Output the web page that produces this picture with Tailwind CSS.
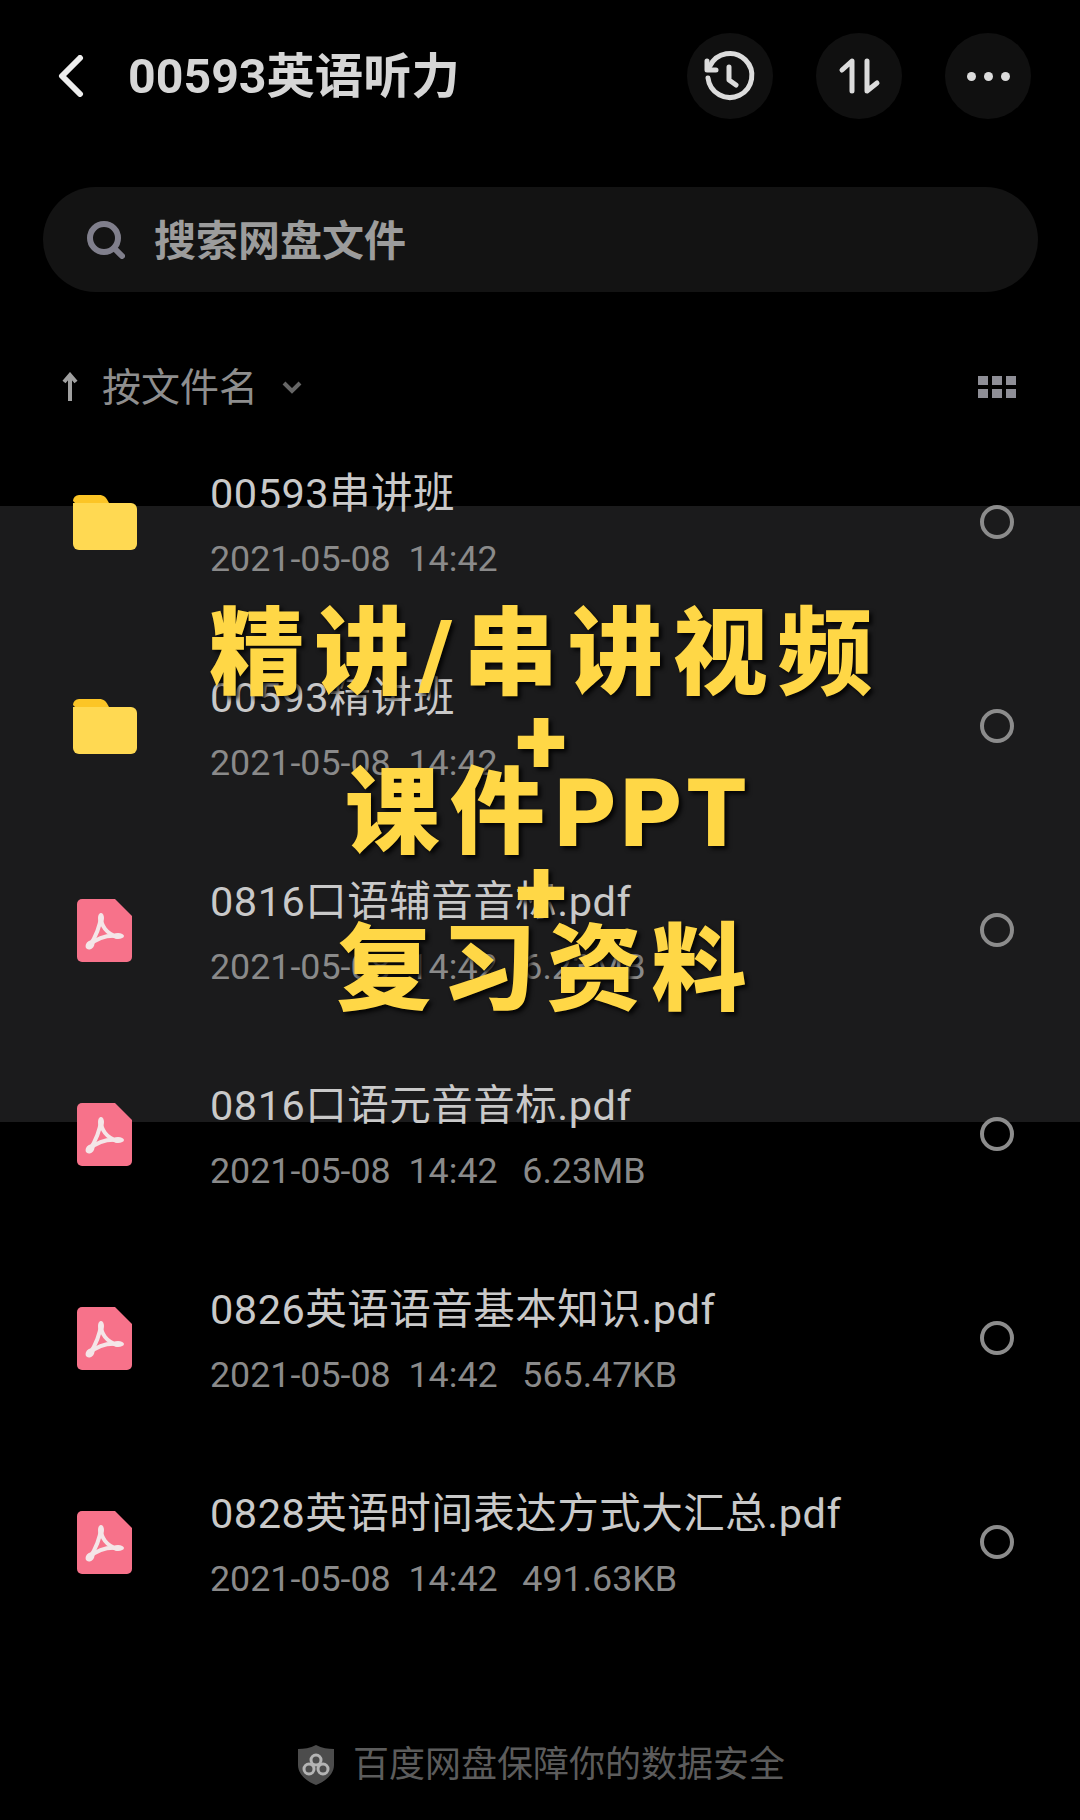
<!DOCTYPE html>
<html lang="zh-CN">
<head>
  <meta charset="UTF-8" />
  <title>00593英语听力</title>
  <script src="https://cdn.jsdelivr.net/npm/@tailwindcss/browser@4"></script>
</head>
<body class="bg-black">
  <div class="relative w-[1080px] h-[1820px] overflow-hidden bg-black font-['Roboto','Noto_Sans_CJK_SC',sans-serif]">

    <!-- Band behind the list -->
    <div class="absolute left-0 top-[506px] w-full h-[616px] bg-[#1b1b1c]"></div>

    <div class="relative">
      <!-- Header -->
      <div class="h-[152px] flex items-center pl-[56px] pr-[49px]">
        <svg width="28" height="42" viewBox="0 0 28 42" fill="none" stroke="#eeeeee" stroke-width="6" stroke-linecap="round" stroke-linejoin="round"><path d="M24 3L6 21L24 39"/></svg>
        <h1 class="ml-[44px] mt-[3px] text-[48.3px] leading-none font-bold text-[#d6d6d6]">00593英语听力</h1>
        <div class="ml-auto flex gap-[43px]">
          <button class="w-[86px] h-[86px] rounded-full bg-[#101010] flex items-center justify-center">
            <svg width="60" height="60" viewBox="0 0 60 60" fill="none" stroke="#dcdcdc" stroke-width="5" stroke-linecap="round" stroke-linejoin="round"><path d="M10 20A22 22 0 1 1 8 32"/><path d="M7 15V24H16"/><path d="M29 21V34L36 39"/></svg>
          </button>
          <button class="w-[86px] h-[86px] rounded-full bg-[#101010] flex items-center justify-center">
            <svg width="86" height="86" viewBox="0 0 86 86" fill="none" stroke="#dcdcdc" stroke-width="5" stroke-linecap="round" stroke-linejoin="round"><path d="M36 58V28L26 37"/><path d="M51 28V58L61 50"/></svg>
          </button>
          <button class="w-[86px] h-[86px] rounded-full bg-[#101010] flex items-center justify-center gap-[8px]">
            <span class="w-[9px] h-[9px] rounded-full bg-[#dcdcdc]"></span>
            <span class="w-[9px] h-[9px] rounded-full bg-[#dcdcdc]"></span>
            <span class="w-[9px] h-[9px] rounded-full bg-[#dcdcdc]"></span>
          </button>
        </div>
      </div>

      <!-- Search -->
      <div class="mt-[35px] ml-[43px] mr-[42px] h-[105px] rounded-full bg-[#131313] flex items-center pl-[44px]">
        <svg width="38" height="38" viewBox="0 0 38 38" fill="none" stroke="#807f8c" stroke-width="6" stroke-linecap="round"><circle cx="17" cy="17" r="14"/><path d="M28 28L35 35"/></svg>
        <span class="ml-[29px] mt-[4px] text-[42px] leading-none font-bold text-[#9c9c9c]">搜索网盘文件</span>
      </div>

      <!-- Sort row -->
      <div class="h-[128px] pt-[62px] pl-[62px] pr-[64px] flex items-center">
        <svg width="16" height="30" viewBox="0 0 16 30" fill="none" stroke="#a0a0a0" stroke-width="4"><path d="M8 29V4"/><path d="M2 10L8 3L14 10"/></svg>
        <span class="ml-[24px] mt-[3px] text-[39px] leading-none text-[#8e8e8e]">按文件名</span>
        <svg class="ml-[24px]" width="20" height="14" viewBox="0 0 20 14" fill="none" stroke="#666666" stroke-width="4"><path d="M2 3L10 11L18 3"/></svg>
        <div class="ml-auto grid grid-cols-3 gap-[4px]">
          <span class="w-[10px] h-[9px] bg-[#8e8e96]"></span><span class="w-[10px] h-[9px] bg-[#8e8e96]"></span><span class="w-[10px] h-[9px] bg-[#8e8e96]"></span>
          <span class="w-[10px] h-[9px] bg-[#8e8e96]"></span><span class="w-[10px] h-[9px] bg-[#8e8e96]"></span><span class="w-[10px] h-[9px] bg-[#8e8e96]"></span>
        </div>
      </div>

      <!-- File list -->
      <div>
        <div class="h-[204px] flex items-center pl-[73px] pr-[66px]">
          <div class="w-[64px] flex justify-center">
            <svg width="64" height="55" viewBox="0 0 64 55"><path d="M0 6a6 6 0 0 1 6-6h20c5 0 7 2 10 8H2z" fill="#fcc526"/><path d="M0 8h58a6 6 0 0 1 6 6v35a6 6 0 0 1-6 6H6a6 6 0 0 1-6-6z" fill="#ffd952"/></svg>
          </div>
          <div class="ml-[73px] pt-[9px]">
            <div class="text-[41.5px] leading-[48px] tracking-[0.5px] text-[#c9c9c9]">00593串讲班</div>
            <div class="mt-[17px] text-[35.8px] leading-[48px] text-[#8a8a8a] whitespace-pre">2021-05-08  14:42</div>
          </div>
          <span class="ml-auto w-[34px] h-[34px] rounded-full border-4 border-[#8c8c8c]"></span>
        </div>

        <div class="h-[204px] flex items-center pl-[73px] pr-[66px]">
          <div class="w-[64px] flex justify-center">
            <svg width="64" height="55" viewBox="0 0 64 55"><path d="M0 6a6 6 0 0 1 6-6h20c5 0 7 2 10 8H2z" fill="#fcc526"/><path d="M0 8h58a6 6 0 0 1 6 6v35a6 6 0 0 1-6 6H6a6 6 0 0 1-6-6z" fill="#ffd952"/></svg>
          </div>
          <div class="ml-[73px] pt-[9px]">
            <div class="text-[41.5px] leading-[48px] tracking-[0.5px] text-[#c9c9c9]">00593精讲班</div>
            <div class="mt-[17px] text-[35.8px] leading-[48px] text-[#8a8a8a] whitespace-pre">2021-05-08  14:42</div>
          </div>
          <span class="ml-auto w-[34px] h-[34px] rounded-full border-4 border-[#8c8c8c]"></span>
        </div>

        <div class="h-[204px] flex items-center pl-[73px] pr-[66px]">
          <div class="w-[64px] flex justify-center">
            <svg class="-ml-[1px]" width="55" height="63" viewBox="0 0 55 63"><path d="M5 0h33l17 17v41a5 5 0 0 1-5 5H5a5 5 0 0 1-5-5V5a5 5 0 0 1 5-5z" fill="#f7728a"/><g fill="none" stroke="#f4e6e8" stroke-width="4"><path d="M24 18c-1 8-5 20-11 28"/><path d="M24 18c0 8 5 17 17 20"/><path d="M13 46c6-6 16-10 28-9"/></g><ellipse cx="24" cy="19" rx="3" ry="5" fill="#f4e6e8"/><ellipse cx="13" cy="46" rx="4" ry="5" fill="#f4e6e8" transform="rotate(40 13 46)"/><ellipse cx="41" cy="37" rx="6" ry="3" fill="#f4e6e8"/></svg>
          </div>
          <div class="ml-[73px] pt-[9px]">
            <div class="text-[41.5px] leading-[48px] tracking-[0.5px] text-[#c9c9c9]">0816口语辅音音标.pdf</div>
            <div class="mt-[17px] text-[35.8px] leading-[48px] text-[#8a8a8a] whitespace-pre">2021-05-08  14:42   <span class="-ml-[2px]">6.23MB</span></div>
          </div>
          <span class="ml-auto w-[34px] h-[34px] rounded-full border-4 border-[#8c8c8c]"></span>
        </div>

        <div class="h-[204px] flex items-center pl-[73px] pr-[66px]">
          <div class="w-[64px] flex justify-center">
            <svg class="-ml-[1px]" width="55" height="63" viewBox="0 0 55 63"><path d="M5 0h33l17 17v41a5 5 0 0 1-5 5H5a5 5 0 0 1-5-5V5a5 5 0 0 1 5-5z" fill="#f7728a"/><g fill="none" stroke="#f4e6e8" stroke-width="4"><path d="M24 18c-1 8-5 20-11 28"/><path d="M24 18c0 8 5 17 17 20"/><path d="M13 46c6-6 16-10 28-9"/></g><ellipse cx="24" cy="19" rx="3" ry="5" fill="#f4e6e8"/><ellipse cx="13" cy="46" rx="4" ry="5" fill="#f4e6e8" transform="rotate(40 13 46)"/><ellipse cx="41" cy="37" rx="6" ry="3" fill="#f4e6e8"/></svg>
          </div>
          <div class="ml-[73px] pt-[9px]">
            <div class="text-[41.5px] leading-[48px] tracking-[0.5px] text-[#c9c9c9]">0816口语元音音标.pdf</div>
            <div class="mt-[17px] text-[35.8px] leading-[48px] text-[#8a8a8a] whitespace-pre">2021-05-08  14:42   <span class="-ml-[2px]">6.23MB</span></div>
          </div>
          <span class="ml-auto w-[34px] h-[34px] rounded-full border-4 border-[#8c8c8c]"></span>
        </div>

        <div class="h-[204px] flex items-center pl-[73px] pr-[66px]">
          <div class="w-[64px] flex justify-center">
            <svg class="-ml-[1px]" width="55" height="63" viewBox="0 0 55 63"><path d="M5 0h33l17 17v41a5 5 0 0 1-5 5H5a5 5 0 0 1-5-5V5a5 5 0 0 1 5-5z" fill="#f7728a"/><g fill="none" stroke="#f4e6e8" stroke-width="4"><path d="M24 18c-1 8-5 20-11 28"/><path d="M24 18c0 8 5 17 17 20"/><path d="M13 46c6-6 16-10 28-9"/></g><ellipse cx="24" cy="19" rx="3" ry="5" fill="#f4e6e8"/><ellipse cx="13" cy="46" rx="4" ry="5" fill="#f4e6e8" transform="rotate(40 13 46)"/><ellipse cx="41" cy="37" rx="6" ry="3" fill="#f4e6e8"/></svg>
          </div>
          <div class="ml-[73px] pt-[9px]">
            <div class="text-[41.5px] leading-[48px] tracking-[0.5px] text-[#c9c9c9]">0826英语语音基本知识.pdf</div>
            <div class="mt-[17px] text-[35.8px] leading-[48px] text-[#8a8a8a] whitespace-pre">2021-05-08  14:42   <span class="-ml-[2px]">565.47KB</span></div>
          </div>
          <span class="ml-auto w-[34px] h-[34px] rounded-full border-4 border-[#8c8c8c]"></span>
        </div>

        <div class="h-[204px] flex items-center pl-[73px] pr-[66px]">
          <div class="w-[64px] flex justify-center">
            <svg class="-ml-[1px]" width="55" height="63" viewBox="0 0 55 63"><path d="M5 0h33l17 17v41a5 5 0 0 1-5 5H5a5 5 0 0 1-5-5V5a5 5 0 0 1 5-5z" fill="#f7728a"/><g fill="none" stroke="#f4e6e8" stroke-width="4"><path d="M24 18c-1 8-5 20-11 28"/><path d="M24 18c0 8 5 17 17 20"/><path d="M13 46c6-6 16-10 28-9"/></g><ellipse cx="24" cy="19" rx="3" ry="5" fill="#f4e6e8"/><ellipse cx="13" cy="46" rx="4" ry="5" fill="#f4e6e8" transform="rotate(40 13 46)"/><ellipse cx="41" cy="37" rx="6" ry="3" fill="#f4e6e8"/></svg>
          </div>
          <div class="ml-[73px] pt-[9px]">
            <div class="text-[41.5px] leading-[48px] tracking-[0.5px] text-[#c9c9c9]">0828英语时间表达方式大汇总.pdf</div>
            <div class="mt-[17px] text-[35.8px] leading-[48px] text-[#8a8a8a] whitespace-pre">2021-05-08  14:42   <span class="-ml-[2px]">491.63KB</span></div>
          </div>
          <span class="ml-auto w-[34px] h-[34px] rounded-full border-4 border-[#8c8c8c]"></span>
        </div>
      </div>

      <!-- Footer -->
      <div class="mt-[101px] pl-[3px] flex items-center justify-center gap-[19px]">
        <svg width="36" height="40" viewBox="0 0 36 40"><path d="M18 0C24 3 30 4 36 4V20C36 30 26 37 18 40C10 37 0 30 0 20V4C6 4 12 3 18 0z" fill="#4c4c4c"/><g fill="none" stroke="#b4b4b4" stroke-width="3"><circle cx="18" cy="15" r="5"/><circle cx="11" cy="24" r="5"/><circle cx="25" cy="24" r="5"/></g></svg>
        <span class="text-[36px] leading-none text-[#5c5c5c]">百度网盘保障你的数据安全</span>
      </div>
    </div>

    <!-- Promo caption over the list -->
    <div class="absolute left-0 top-[615px] w-full pl-[12px] flex flex-col items-center text-[95px] leading-[80px] font-black tracking-[10px] text-[#ffd746] [text-shadow:3px_3px_4px_rgba(0,0,0,0.85)]">
      <div>精讲/串讲视频</div>
      <div class="mt-[7px]">+</div>
      <div class="-mt-[8px] ml-[3px]">课件<span class="tracking-[4px]">PPT</span></div>
      <div class="-mt-[1px]">+</div>
      <div class="-mt-[2px] ml-[1px]">复习资料</div>
    </div>
  </div>
</body>
</html>
